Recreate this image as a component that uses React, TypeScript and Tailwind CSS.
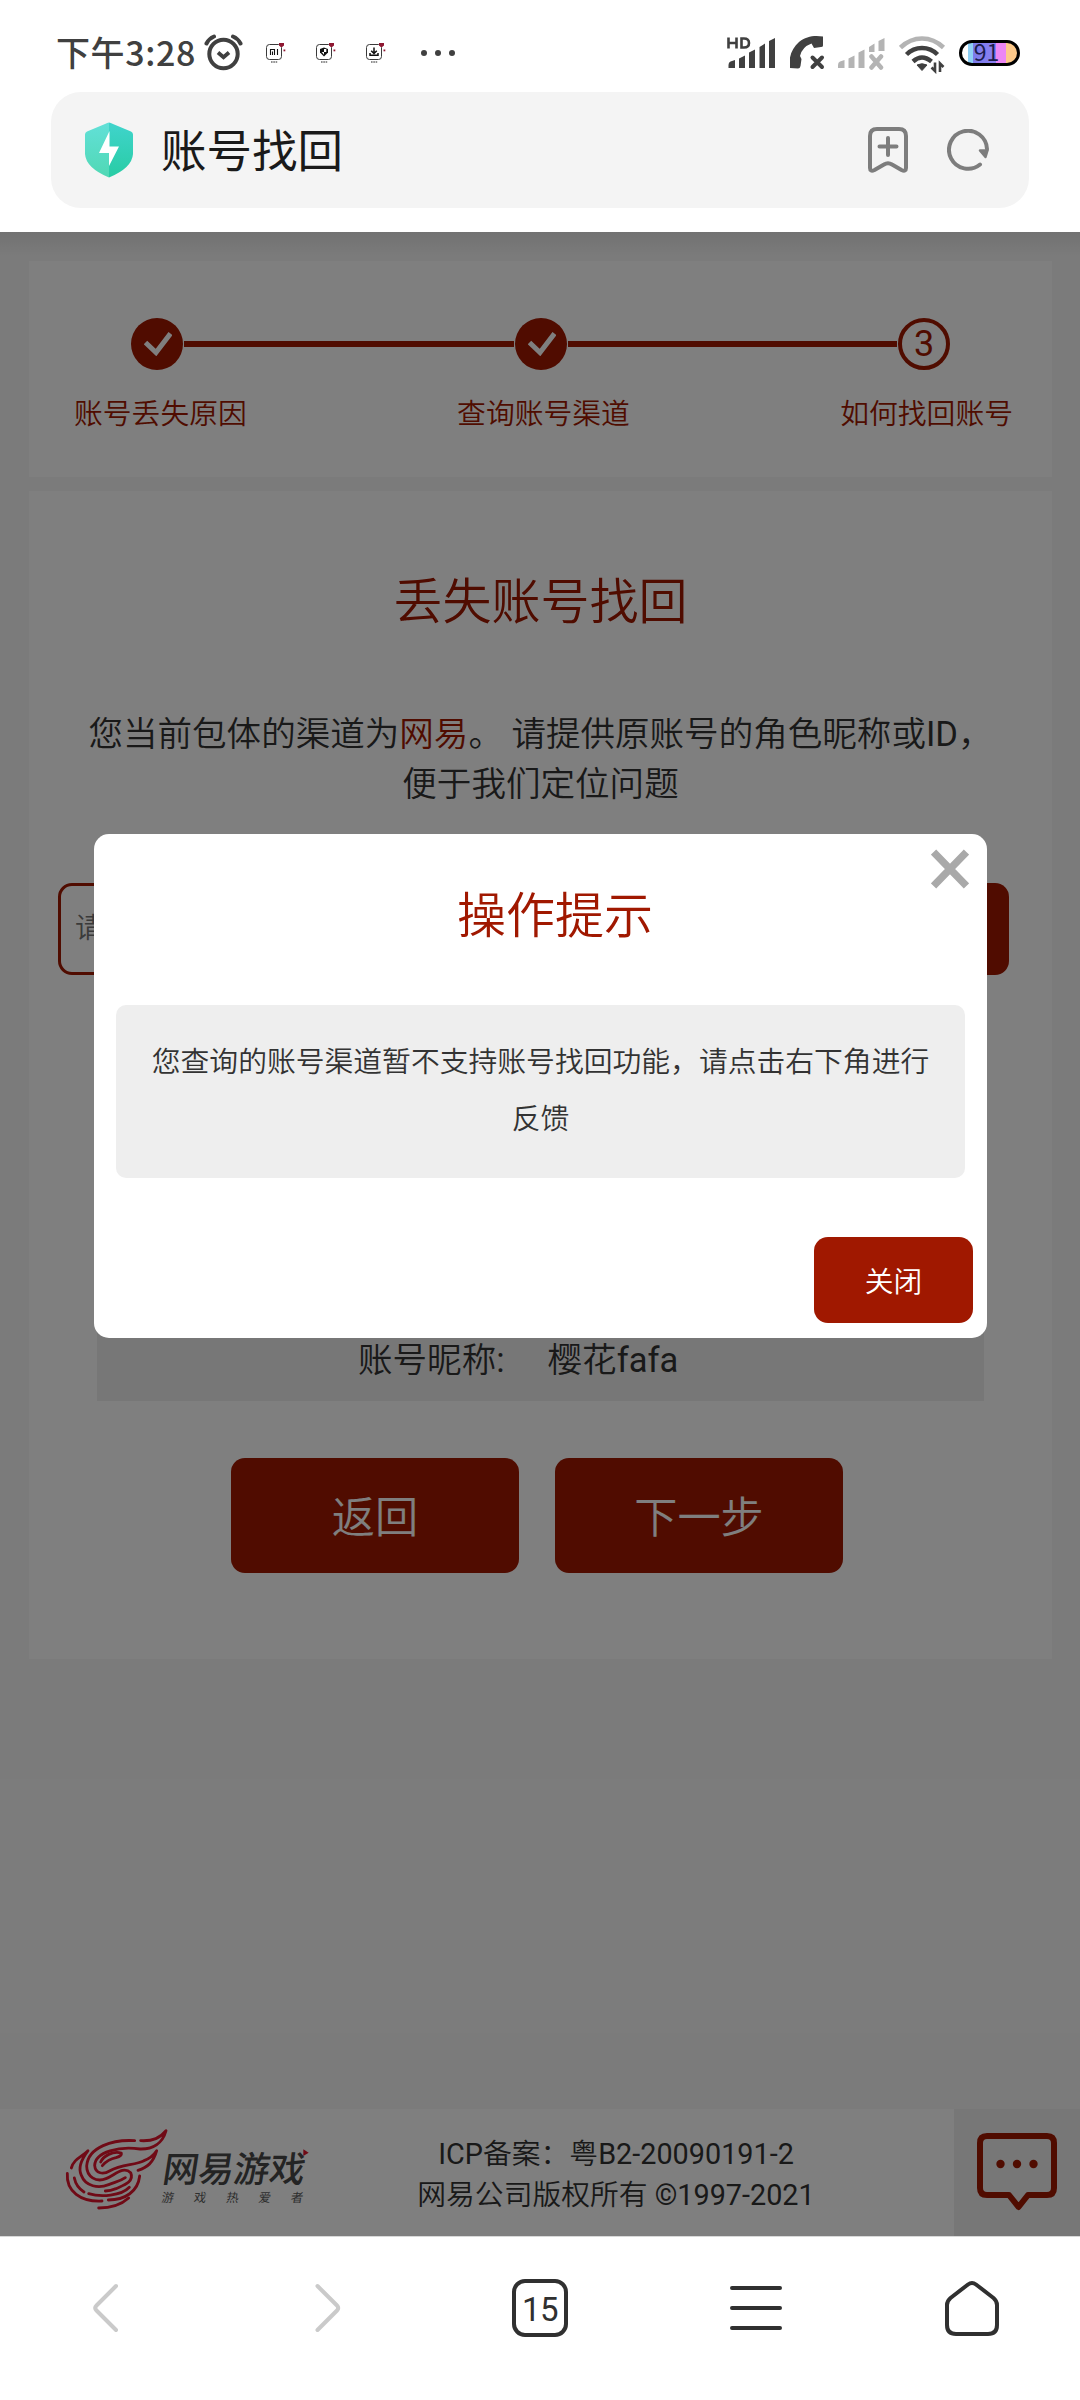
import clsx from 'clsx'

const STEPS = [
  { label: '账号丢失原因', done: true },
  { label: '查询账号渠道', done: true },
  { label: '如何找回账号', done: false },
]

function AlarmIcon() {
  return (
    <svg width="40" height="38" viewBox="0 0 40 38" fill="none" stroke="#404040" strokeLinecap="round" className="ml-[8px]">
      <circle cx="19.5" cy="21" r="14.2" strokeWidth="4" />
      <path d="M2.5 10.5Q5 5.5 10 3.5M36.500 10.500Q34 5.500 29 3.500" strokeWidth="4" />
      <path d="M14 19.500l5.500 4.800 5.500-4.800" strokeWidth="3.800" strokeLinecap="butt" />
    </svg>
  )
}

function NoticeIcon({ kind }: { kind: 'mi' | 'shield' | 'download' }) {
  return (
    <svg width="20" height="20" viewBox="0 0 20 20" fill="none">
      <rect x="0.500" y="1.500" width="15" height="15" rx="3" stroke="#3a3a3a" strokeWidth="1" />
      <path d="M13 0h5v2.500l-2.500 2-2.500-2z" fill="#8f1732" />
      <path d="M17.500 6.500h1.800v1.800h-1.800z" fill="#8f1732" />
      <path d="M5 19h6.500" stroke="#222" strokeWidth="1.200" strokeDasharray="1.600 0.700" />
      {kind === 'mi' && <path d="M4.500 12V6.500h4V12M6.500 8.500V12M11.500 6v6" stroke="#111" strokeWidth="1.100" />}
      {kind === 'shield' && (
        <>
          <path d="M4 6L8 4.500 12 6v3.500L8 13.500 4 9.500z" fill="#111" />
          <path d="M8 6h2.300v3H8zM5.700 9H8v2.700z" fill="#fff" />
        </>
      )}
      {kind === 'download' && <path d="M8 4.500v5M5.200 7.800L8 10.500l2.800-2.700M4 10v2.300h8V10" stroke="#111" strokeWidth="1.500" />}
    </svg>
  )
}

function StatusBar() {
  return (
    <div className="flex h-[92px] items-start">
      <span className="ml-[56px] mt-[27px] text-[34px] leading-[50px] font-medium tracking-[0.6px] text-[#404040] font-['Noto_Sans_CJK_SC',sans-serif] whitespace-nowrap">下午3:28</span>
      <div className="mt-[33px]">
        <AlarmIcon />
      </div>
      <div className="ml-[22px] mt-[43px] flex gap-[30px]">
        <NoticeIcon kind="mi" />
        <NoticeIcon kind="shield" />
        <NoticeIcon kind="download" />
      </div>
      <div className="ml-[35px] mt-[50px] flex gap-2">
        <i className="size-1.5 rounded-full bg-[#404040]" />
        <i className="size-1.5 rounded-full bg-[#404040]" />
        <i className="size-1.5 rounded-full bg-[#404040]" />
      </div>
      <div className="ml-auto mr-[60px] mt-[34px] flex items-start">
        {/* HD signal */}
        <svg width="50" height="36" viewBox="0 0 50 36" fill="#404040" className="mr-[13px]">
          <path d="M1.500 3.500v11M9.500 3.500v11M1.500 9h8M14.500 4.500v9h2.500q5 0 5-4.500t-5-4.500z" fill="none" stroke="#404040" strokeWidth="2.600" />
          <path d="M1.500 31q0-3 2-3.500l4.500-1.500v8h-6.500zM12 24.500l6-3V34h-6zM22 18.500l6-3V34h-6zM32.500 13l5.500-3.500V34h-5.500zM42 7l6-3V34h-6z" />
        </svg>
        <svg width="36" height="36" viewBox="0 0 36 36" className="mr-[12px]">
          <path d="M0 34C-2 24 2 14 9 8C16 2 25 1 33 2.500V11.500Q33 13 31 13L24 14L21.500 9.500Q12 13 10 22L11.500 25L10.500 32Q10 34.500 8 34.500Z" fill="#404040" />
          <path d="M22.500 23.500l9.500 9.500M32 23.500l-9.500 9.500" stroke="#404040" strokeWidth="4" strokeLinecap="round" />
        </svg>
        <svg width="50" height="36" viewBox="0 0 50 36" fill="#b4b4b4" className="mr-[11px]">
          <path d="M0 31q0-3 2-3.500l4.500-1.500v8H0zM10.500 24.500l6-3V34h-6zM20.500 18.500l6-3V34h-6zM31 13l5.500-3.500V18H31zM40.500 7l6-3V17h-6z" />
          <path d="M33.500 22.500l9.500 11M43 22.500l-9.500 11" stroke="#b4b4b4" strokeWidth="4.500" strokeLinecap="round" />
        </svg>
        <svg width="48" height="40" viewBox="0 0 48 40" fill="none" className="mr-[12px]">
          <path d="M1.500 13.500Q11 4.500 23 4.500T44.500 13.500" stroke="#b4b4b4" strokeWidth="4.500" />
          <path d="M7.500 20.500Q14 14 23 14T38.500 20.500M14 27.500Q18.500 23.500 23 23.500T32.500 27.500" stroke="#404040" strokeWidth="4.500" />
          <path d="M18 31Q23 28.500 28 31L23 36.500z" fill="#404040" stroke="#404040" />
          <path d="M36 28.500V37L32.500 33.500M41 38V29.500L44.500 33" stroke="#404040" strokeWidth="2.600" />
        </svg>
        <div className="mt-[6px] flex h-[26px] w-[61px] items-center justify-center rounded-full border-[3px] border-black bg-[linear-gradient(90deg,#fff_11%,#8fd0f5_11%,#8fd0f5_20%,#7b7bea_20%,#8a80f2_62%,#ec86f4_62%,#ec86f4_80%,#fdc98a_80%)] text-[23px] leading-none font-normal text-[#1c1c4c] font-['Noto_Sans_CJK_SC',sans-serif]">
          <span className="-mt-[3px] -ml-1.5">91</span>
        </div>
      </div>
    </div>
  )
}

function AddressBar() {
  return (
    <div className="mx-[51px] flex h-[116px] items-center rounded-[30px] bg-[#f4f4f4]">
      <svg width="48" height="56" viewBox="0 0 48 56" className="ml-[34px]">
        <defs>
          <linearGradient id="shieldL" x1="0" y1="0" x2="0" y2="1">
            <stop offset="0" stopColor="#62e0d8" />
            <stop offset="1" stopColor="#50d8b4" />
          </linearGradient>
          <linearGradient id="shieldR" x1="0" y1="0" x2="0" y2="1">
            <stop offset="0" stopColor="#40d4cc" />
            <stop offset="1" stopColor="#28cca4" />
          </linearGradient>
        </defs>
        <path d="M24 .5Q22.500 .5 20 2L2 9.500Q0 10.500 0 12.500V32Q1 46 24 55.500Z" fill="url(#shieldL)" />
        <path d="M24 .5Q25.500 .5 28 2L46 9.500Q48 10.500 48 12.500V32Q47 46 24 55.500Z" fill="url(#shieldR)" />
        <path d="M24.500 9L14 31H24V44L34 24.500H24.500Z" fill="#fff" />
      </svg>
      <span className="mb-1 ml-[28px] text-[45.500px] leading-[60px] font-normal text-[#1a1a1a] font-['Noto_Sans_CJK_SC',sans-serif]">账号找回</span>
      <svg width="40" height="46" viewBox="0 0 40 46" fill="none" stroke="#7d7d7d" strokeWidth="4" strokeLinecap="round" strokeLinejoin="round" className="ml-auto">
        <path d="M2 9Q2 2 9 2H31Q38 2 38 9V41Q38 45 33.500 43L24 37.500Q20 35 16 37.500L6.500 43Q2 45 2 41Z" />
        <path d="M20 11v17M11.500 19.500h17" />
      </svg>
      <svg width="42" height="42" viewBox="0 0 42 42" fill="none" stroke="#7d7d7d" strokeWidth="4" strokeLinecap="round" className="ml-[39px] mr-[40px]">
        <path d="M33 35.500A19 19 0 1 1 40 20" />
        <path d="M33 21.500L40.500 21.500L38.500 28Z" fill="#7d7d7d" strokeWidth="2.500" strokeLinejoin="round" />
      </svg>
    </div>
  )
}

function StepDot({ index, done }: { index: number; done: boolean }) {
  return (
    <div
      className={clsx(
        'flex size-[52px] shrink-0 items-center justify-center rounded-full',
        done ? 'bg-[#a01800]' : 'border-4 border-[#a01800] text-[36px] leading-none font-normal text-[#a01800]',
      )}
    >
      {done ? (
        <svg width="28" height="24" viewBox="0 0 28 24" fill="none" stroke="#fff" strokeWidth="5" className="ml-0.5">
          <path d="M1.500 10.500L12 20.500L26.500 1.500" />
        </svg>
      ) : (
        index + 1
      )}
    </div>
  )
}

function Stepper() {
  return (
    <section className="ml-[29px] h-[216px] w-[1023px] bg-white pt-[57px]">
      <div className="mr-[102px] ml-[102px] flex items-center">
        {STEPS.map((step, i) => (
          <div key={step.label} className={clsx('flex items-center', i > 0 && 'flex-1')}>
            {i > 0 && <div className="mx-px h-1.5 flex-1 bg-[#a01800]" />}
            <StepDot index={i} done={step.done} />
          </div>
        ))}
      </div>
      <div className="mt-[24px] mr-[39px] ml-[45px] flex justify-between text-[28.800px] leading-[40px] text-[#a01800]">
        {STEPS.map(step => <span key={step.label}>{step.label}</span>)}
      </div>
    </section>
  )
}

function RecoverCard() {
  return (
    <section className="mt-[14px] ml-[29px] h-[1168px] w-[1023px] bg-white pt-[77px]">
      <h1 className="text-center text-[49px] leading-[70px] text-[#a01800]">丢失账号找回</h1>
      <p className="mt-[71px] text-center text-[34.560px] leading-[50px] whitespace-nowrap text-[#333]">
        您当前包体的渠道为<span className="text-[#a01800]">网易</span>。 请提供原账号的角色昵称或<span className="font-normal">ID</span>，
        <br />
        便于我们定位问题
      </p>
      <div className="mt-[74px] ml-[29px] flex h-[92px] w-[951px]">
        <div className="flex flex-1 items-center rounded-[14px] border-[3px] border-[#a01800] pl-[14px] text-[28px] text-[#757575]">请</div>
        <div className="ml-5 w-[180px] rounded-[14px] bg-[#a01800]" />
      </div>
      <div className="mt-[215px] ml-[68px] flex h-[211px] w-[887px] items-end bg-[#eee] pb-[16px] pl-[261px] text-[34.560px] leading-[50px] text-[#333]">
        <span>账号昵称<span className="font-normal">:</span></span>
        <span className="ml-[43px]">樱花<span className="font-normal">fafa</span></span>
      </div>
      <div className="mt-[57px] ml-[202px] flex gap-9 text-[43.200px] text-white">
        <button className="h-[115px] w-[288px] rounded-[14px] bg-[#a01800] pt-2">返回</button>
        <button className="h-[115px] w-[288px] rounded-[14px] bg-[#a01800] pt-2">下一步</button>
      </div>
    </section>
  )
}

function Logo() {
  return (
    <svg width="260" height="100" viewBox="0 0 780 300" fill="none" className="ml-[60px]">
      <g stroke="#e0142c" strokeWidth="8.500" strokeLinecap="round" strokeLinejoin="round">
        {/* flame and the ridges under it */}
        <path d="M224 62C160 58 84 80 80 138C80 170 108 188 138 176C164 166 190 136 212 158C224 186 190 196 168 206C156 211 146 213 136 213" />
        <path d="M242 62C280 64 300 54 318 32C308 70 278 88 240 87C180 78 106 94 104 136C106 162 130 164 150 152C185 132 225 136 252 122C272 114 282 104 290 92C280 128 262 142 234 151" />
        <path d="M127 137C140 122 152 116 168 113Q186 108 184 99C158 92 130 108 122 126" />
        <path d="M34 144C42 116 64 112 84 92C60 124 56 150 64 166C76 200 116 206 146 194C165 186 180 184 196 173" />
        <path d="M22 160C18 214 62 246 126 243" />
        <path d="M43 174C47 194 56 206 72 216" />
        <path d="M86 221C122 232 184 228 208 202" />
        <path d="M145 240C196 240 234 214 239 168" />
        <path d="M116 264C156 264 186 252 206 234" />
      </g>
      <g fill="#484848" fontFamily="'Noto Sans CJK SC', sans-serif">
        <text transform="translate(304 187) skewX(-9)" fontSize="107" fontWeight="500" textLength="426">网易游戏</text>
        <text transform="translate(303 247) skewX(-9)" x="0 97 194 291 388" fontSize="37" fontWeight="400" fill="#5c5c5c">游戏热爱者</text>
      </g>
      <path d="M730 88l16 10-16 10z" fill="#e0142c" />
    </svg>
  )
}

function Footer() {
  return (
    <footer className="mt-auto flex h-[127px] bg-white">
      <div className="flex w-[954px] items-start pt-[11px]">
        <Logo />
        <div className="mt-[14px] ml-[95px] w-[402px] text-center text-[28.800px] leading-[41px] text-[#333]">
          <p><span className="font-normal">ICP</span>备案：粤<span className="font-normal">B2-20090191-2</span></p>
          <p>网易公司版权所有 <span className="font-normal">©1997-2021</span></p>
        </div>
      </div>
      <div className="flex flex-1 justify-center bg-[#eee] pt-[23px]">
        <svg width="80" height="80" viewBox="0 0 80 80" fill="none" stroke="#a01800" strokeWidth="6" strokeLinejoin="round">
          <path d="M10 4H70Q77 4 77 11V56Q77 63 70 63H51L41.500 75L32 63H10Q3 63 3 56V11Q3 4 10 4Z" />
          <g fill="#a01800" stroke="none">
            <circle cx="23.500" cy="32" r="4.200" />
            <circle cx="40" cy="32" r="4.200" />
            <circle cx="56.500" cy="32" r="4.200" />
          </g>
        </svg>
      </div>
    </footer>
  )
}

function TipDialog() {
  return (
    <div className="absolute top-[602px] left-[94px] flex h-[504px] w-[893px] flex-col rounded-[15px] bg-white pt-[48px]">
      <h2 className="pl-[29px] text-center text-[49px] leading-[70px] text-[#a01800]">操作提示</h2>
      <svg width="38" height="40" viewBox="0 0 38 40" stroke="#a9a9a9" strokeWidth="7.500" className="absolute top-[15px] right-[18px]">
        <path d="M2.500 3l33 34M35.500 3l-33 34" />
      </svg>
      <div className="mx-[22px] mt-[53px] h-[173px] rounded-[10px] bg-[#eee] px-[30px] pt-[29px] text-center text-[28.800px] leading-[57px] text-[#333]">
        您查询的账号渠道暂不支持账号找回功能，请点击右下角进行反馈
      </div>
      <button className="mt-[59px] mr-[14px] ml-auto h-[86px] w-[159px] rounded-[14px] bg-[#a01800] pt-[5px] text-[28.800px] text-white">关闭</button>
    </div>
  )
}

function NavBar() {
  return (
    <nav className="grid h-[164px] grid-cols-5 justify-items-center border-t border-[#d8d8d8] bg-white pt-[41px]">
      <svg width="60" height="60" viewBox="0 0 60 60" fill="none" stroke="#cacaca" strokeWidth="4" strokeLinecap="round" strokeLinejoin="round">
        <path d="M38 8L18.500 27.500Q16 30 18.500 32.500L38 52" />
      </svg>
      <svg width="60" height="60" viewBox="0 0 60 60" fill="none" stroke="#cacaca" strokeWidth="4" strokeLinecap="round" strokeLinejoin="round">
        <path d="M23.500 8L43 27.500Q45.500 30 43 32.500L23.500 52" />
      </svg>
      <div className="mt-px flex h-[58px] w-[56px] items-center justify-center rounded-[13px] border-4 border-[#303030] pt-0.5 text-[33px] leading-none font-normal tracking-[-0.5px] text-[#303030]">15</div>
      <svg width="60" height="60" viewBox="0 0 60 60" stroke="#303030" strokeWidth="4" strokeLinecap="round">
        <path d="M6 10h48M6 30h48M6 50h48" />
      </svg>
      <svg width="60" height="60" viewBox="0 0 60 60" fill="none" stroke="#303030" strokeWidth="4" strokeLinejoin="round">
        <path d="M26 6.500Q30 3.500 34 6.500L51.500 20Q55 23 55 27V47Q55 56 46 56H14Q5 56 5 47V27Q5 23 8.500 20Z" />
      </svg>
    </nav>
  )
}

export default function App() {
  return (
    <div className="flex h-[2400px] w-[1080px] flex-col overflow-hidden bg-white font-[Roboto,'Noto_Sans_CJK_SC',sans-serif] font-[350]">
      <header className="h-[232px] shrink-0">
        <StatusBar />
        <AddressBar />
      </header>
      <main className="relative flex h-[2004px] shrink-0 flex-col bg-[#f7f7f7] pt-[29px]">
        <Stepper />
        <RecoverCard />
        <Footer />
        <div className="absolute inset-0 bg-black/50" />
        <div className="absolute inset-x-0 top-0 h-6 bg-linear-to-b from-black/8 to-transparent" />
        <TipDialog />
      </main>
      <NavBar />
    </div>
  )
}
